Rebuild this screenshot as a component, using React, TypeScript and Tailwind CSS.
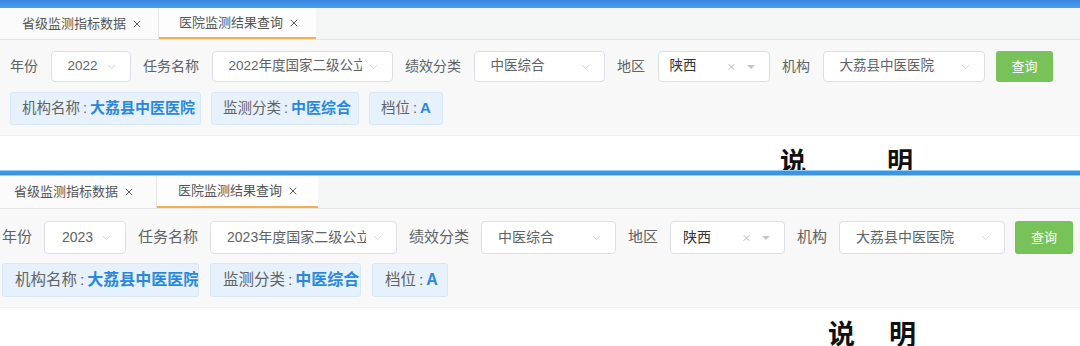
import * as React from "react"

type PanelCfg = {
  root: string
  bar: string
  tabBar: string
  tab1: string
  tab2: string
  filterBox: string
  row: string
  label: string
  value: string
  selects: string[]
  button: string
  tagRow: string
  tags: string[]
  tagText: string
  tagValue: string
  note: string
  noteGap: string
  year: string
  task: string
}

// the screenshot is two captures stacked, at slightly different scales
const panels: PanelCfg[] = [
  {
    root: "h-[170px]",
    bar: "h-[8px] bg-gradient-to-b from-[#3787df] to-[#4a9fe9]",
    tabBar: "h-[32px] text-[13px]",
    tab1: "w-[159px] pl-[22px]",
    tab2: "w-[157px] pl-[20px]",
    filterBox: "pt-[11px] pb-[10px] pl-[10px]",
    row: "h-[31px] gap-[12.5px]",
    label: "text-[14px]",
    value: "text-[13.5px]",
    selects: ["w-[80px] pl-[16px]", "w-[181px] pl-[16px]", "w-[131px] pl-[16px]", "w-[112px] pl-[11px]", "w-[162px] pl-[16px]"],
    button: "w-[57px] h-[31px] ml-[-1px]",
    tagRow: "mt-[10px] h-[33px] gap-[10px]",
    tags: ["w-[191px]", "w-[148px]", "w-[74px]"],
    tagText: "text-[14.5px] pl-[11px]",
    tagValue: "text-[15px]",
    note: "pt-[13px] pl-[780px] text-[26px]",
    noteGap: "gap-[81px]",
    year: "2022",
    task: "2022年度国家二级公立医院绩效考核",
  },
  {
    root: "h-[176px]",
    bar: "h-[6px] bg-[#3d95e2] border-t border-b border-[#8fd0f5]",
    tabBar: "h-[33px] text-[13px]",
    tab1: "w-[157px] pl-[14px]",
    tab2: "w-[161px] pl-[21px]",
    filterBox: "pt-[12px] pb-[10px] pl-[2px]",
    row: "h-[33px] gap-[12px]",
    label: "text-[15px]",
    value: "text-[14px]",
    selects: ["w-[82px] pl-[17px]", "w-[187px] pl-[16px]", "w-[135px] pl-[16px]", "w-[115px] pl-[12px]", "w-[166px] pl-[16px]"],
    button: "w-[58px] h-[33px] ml-[-2px]",
    tagRow: "mt-[9px] h-[34px] gap-[11px]",
    tags: ["w-[197px]", "w-[151px]", "w-[76px]"],
    tagText: "text-[15.5px] pl-[12px]",
    tagValue: "text-[16px]",
    note: "pt-[14px] pl-[828px] text-[27px]",
    noteGap: "gap-[34px]",
    year: "2023",
    task: "2023年度国家二级公立医院绩效考核",
  },
]

function Chevron() {
  return (
    <svg viewBox="0 0 10 6" className="absolute right-[14px] top-1/2 -translate-y-1/2 w-[9px] h-[5px]" fill="none" stroke="#c4c7cc" strokeWidth="0.9">
      <polyline points="0.5,0.5 5,5 9.5,0.5" />
    </svg>
  )
}

function Close({ className }: { className: string }) {
  return (
    <svg viewBox="0 0 10 10" className={className} fill="none" stroke="#555" strokeWidth="1.2">
      <line x1="1" y1="1" x2="9" y2="9" />
      <line x1="9" y1="1" x2="1" y2="9" />
    </svg>
  )
}

function Select({ cls, text, valueCls, region }: { cls: string; text: string; valueCls: string; region?: boolean }) {
  return (
    <div className={"relative h-full shrink-0 bg-white border border-[#dcdfe6] rounded-[4px] flex items-center overflow-hidden pr-[30px] " + cls}>
      <span className={"whitespace-nowrap overflow-hidden " + valueCls + (region ? " text-[#333]" : " text-[#606266]")}>{text}</span>
      {region ? (
        <>
          <Close className="absolute right-[34px] top-1/2 -translate-y-1/2 w-[7px] h-[7px] opacity-50" />
          <span className="absolute right-[14px] top-1/2 -translate-y-1/2 w-0 h-0 border-l-[4px] border-r-[4px] border-t-[4px] border-l-transparent border-r-transparent border-t-[#c0c4cc]" />
        </>
      ) : (
        <Chevron />
      )}
    </div>
  )
}

function Panel({ p }: { p: PanelCfg }) {
  const fields = [
    { label: "年份", value: p.year },
    { label: "任务名称", value: p.task },
    { label: "绩效分类", value: "中医综合" },
    { label: "地区", value: "陕西", region: true },
    { label: "机构", value: "大荔县中医医院" },
  ]
  const tags = [
    { k: "机构名称", v: "大荔县中医医院" },
    { k: "监测分类", v: "中医综合" },
    { k: "档位", v: "A" },
  ]
  return (
    <div className={"flex flex-col overflow-hidden " + p.root}>
      <div className={"shrink-0 " + p.bar} />

      {/* Tabs */}
      <div className={"shrink-0 flex bg-[#f4f5f5] border-b border-[#e3e5e6] text-[#555] " + p.tabBar}>
        <div className={"flex items-center gap-[7px] bg-[#fbfbfb] border-r border-[#e6e6e6] " + p.tab1}>
          <span>省级监测指标数据</span>
          <Close className="w-[8px] h-[8px]" />
        </div>
        <div className={"flex items-center gap-[7px] bg-[#fdfdfd] border-b-2 border-[#efb04d] " + p.tab2}>
          <span>医院监测结果查询</span>
          <Close className="w-[8px] h-[8px]" />
        </div>
      </div>

      {/* Filters */}
      <div className={"shrink-0 bg-[#f7f8f7] " + p.filterBox}>
        <div className={"flex items-center " + p.row}>
          {fields.map((f, i) => (
            <React.Fragment key={f.label}>
              <span className={"shrink-0 text-[#606266] " + p.label}>{f.label}</span>
              <Select cls={p.selects[i]} text={f.value} valueCls={p.value} region={f.region} />
            </React.Fragment>
          ))}
          <button className={"shrink-0 bg-[#77c35a] text-white text-[13px] rounded-[3px] " + p.button}>查询</button>
        </div>
        <div className={"flex " + p.tagRow}>
          {tags.map((t, i) => (
            <div
              key={t.k}
              className={"flex items-center bg-[#e7f1fb] border border-[#d6e7f7] rounded-[3px] whitespace-nowrap overflow-hidden " + p.tags[i] + " " + p.tagText}
            >
              <span className="text-[#606266]">{t.k}</span>
              <span className="text-[#606266] mx-[3px]">:</span>
              <span className={"font-bold text-[#2a88dc] " + p.tagValue}>{t.v}</span>
            </div>
          ))}
        </div>
      </div>

      {/* Note heading, cut off by the capture */}
      <div className="flex-1 bg-white border-t border-[#f0f0f0]">
        <div className={"flex leading-none font-bold text-[#111] " + p.note + " " + p.noteGap}>
          <span>说</span>
          <span>明</span>
        </div>
      </div>
    </div>
  )
}

export default function App() {
  return (
    <div className="w-[1080px] h-[346px] overflow-hidden bg-white font-['Liberation_Sans','Noto_Sans_CJK_SC',sans-serif]">
      {panels.map((p, i) => (
        <Panel key={i} p={p} />
      ))}
    </div>
  )
}
